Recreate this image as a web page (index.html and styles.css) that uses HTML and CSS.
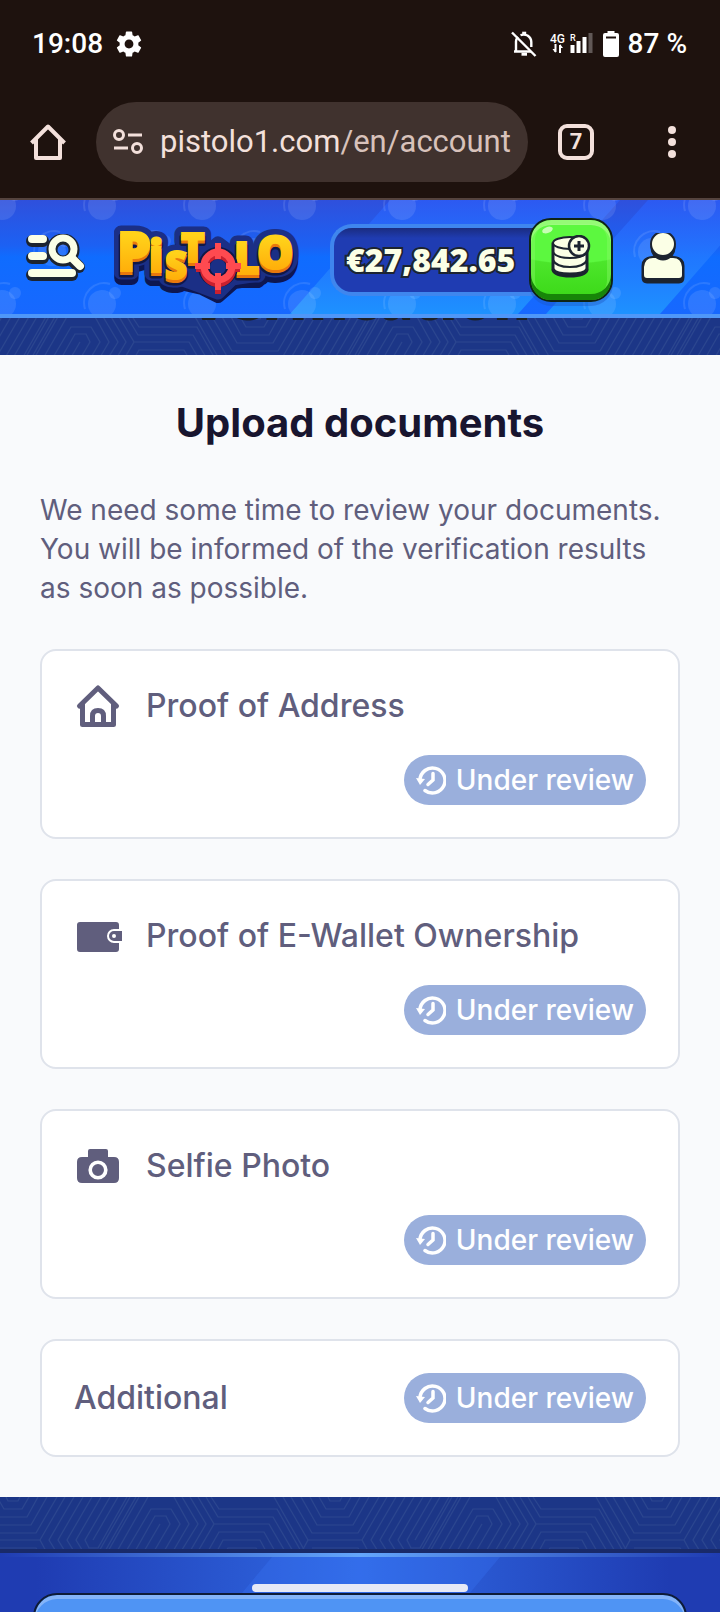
FILE: index.html
```html
<!DOCTYPE html>
<html lang="en">
<head>
<meta charset="utf-8">
<meta name="viewport" content="width=device-width, initial-scale=1">
<title>Upload documents</title>
<link rel="stylesheet" href="styles.css">
</head>
<body>
<div class="page">
  <div class="status">
    <div class="status-group">
      <span>19:08</span>
      <svg class="ic-gear" viewBox="2 2 20 20" width="26" height="26" fill="#fff"><path d="M19.14 12.94c.04-.3.06-.61.06-.94s-.02-.64-.07-.94l2.03-1.58c.18-.14.23-.41.12-.61l-1.92-3.32c-.12-.22-.37-.29-.59-.22l-2.39.96c-.5-.38-1.03-.7-1.62-.94l-.36-2.54c-.04-.24-.24-.41-.48-.41h-3.84c-.24 0-.43.17-.47.41l-.36 2.54c-.59.24-1.13.57-1.62.94l-2.39-.96c-.22-.08-.47 0-.59.22L2.74 8.87c-.12.21-.08.47.12.61l2.03 1.58c-.05.3-.09.63-.09.94s.02.64.07.94l-2.03 1.58c-.18.14-.23.41-.12.61l1.92 3.32c.12.22.37.29.59.22l2.39-.96c.5.38 1.03.7 1.62.94l.36 2.54c.05.24.24.41.48.41h3.84c.24 0 .44-.17.47-.41l.36-2.54c.59-.24 1.13-.56 1.62-.94l2.39.96c.22.08.47 0 .59-.22l1.92-3.32c.12-.22.07-.47-.12-.61l-2.01-1.58zM12 15.4c-1.9 0-3.4-1.5-3.4-3.4s1.5-3.4 3.4-3.4 3.400 1.500 3.400 3.400-1.500 3.400-3.400 3.400z"/></svg>
    </div>
    <div class="status-group status-right">
      <svg width="26" height="26" viewBox="0 0 26 26" fill="none" stroke="#fff" stroke-width="2.4"><path d="M5 20.500V10.500Q5 8 7 6M9.500 4.200Q13 3 16.500 4.500Q20.300 7 20.300 11V16M3 20.500H20"/><path d="M1 1.500L24.500 25"/><path d="M10.500 23.200H16" stroke-width="3"/><path d="M11.200 2.200H15.200" stroke-width="3"/></svg>
      <svg class="ic-net" width="44" height="22" viewBox="0 0 44 22" fill="#fff"><text x="0" y="10" class="net-text">4G</text><path d="M5.500 11V19M10 20V12" stroke="#fff" stroke-width="2" fill="none"/><path d="M2.500 16L5.500 20V16zM13 15L10 11V15z"/><text x="20" y="8" class="net-small">R</text><path d="M20.500 12h4v8h-4zM26.500 8h4v12h-4zM32.500 4h4v16h-4z"/><path d="M38.500 0h4v20h-4z" fill="#615856"/></svg>
      <svg width="16" height="26" viewBox="0 0 16 26"><path fill="#fff" d="M4.500 0h7v2H14q2 0 2 2v20q0 2-2 2H2q-2 0-2-2V4q0-2 2-2h2.500z"/><path d="M3 6.500H13" stroke="#1e120e" stroke-width="2"/></svg>
      <span>87 %</span>
    </div>
  </div>

  <div class="toolbar">
    <button class="plain" aria-label="Home"><svg width="36" height="36" viewBox="0 0 36 36" fill="none" stroke="#f3e0db" stroke-width="4" stroke-linejoin="round"><path d="M1.500 19L18 2.500L34.500 19"/><path d="M6 15V34H30V15"/></svg></button>
    <button class="address">
      <svg width="32" height="26" viewBox="0 0 32 26" fill="none" stroke="#f3e0db" stroke-width="3"><circle cx="7" cy="6" r="4.500"/><circle cx="25" cy="19" r="4.500"/><path d="M16 6H30M2 19H16"/></svg>
      <span>pistolo1.com<span class="url-path">/en/account</span></span>
    </button>
    <button class="tabs" aria-label="Tabs">7</button>
    <button class="plain" aria-label="Menu"><svg width="36" height="36" viewBox="0 0 36 36" fill="#f3e0db"><circle cx="18" cy="6" r="4"/><circle cx="18" cy="18" r="4"/><circle cx="18" cy="30" r="4"/></svg></button>
  </div>

  <header class="site-header">
    <svg class="backdrop" viewBox="0 0 720 114" preserveAspectRatio="xMidYMid slice" aria-hidden="true">
      <defs>
        <linearGradient id="beam" x1="0" y1="0" x2="0" y2="1"><stop offset="0" stop-color="#2b60ff" stop-opacity=".6"/><stop offset="1" stop-color="#1e94ff" stop-opacity=".95"/></linearGradient>
        <g id="bomb"><circle r="14"/><path d="M-17 5A20 20 0 0 1 8-20" fill="none" stroke="#fff" stroke-width="2"/><circle cx="13" cy="-11" r="6"/></g>
        <pattern id="bombs" width="100" height="98" patternUnits="userSpaceOnUse"><g fill="#fff" fill-opacity=".1" stroke-opacity=".1"><use href="#bomb" x="2" y="6"/><use href="#bomb" x="102" y="6"/><use href="#bomb" x="2" y="104"/><use href="#bomb" x="102" y="104"/><use href="#bomb" x="52" y="52"/></g></pattern>
        <pattern id="maze" width="322" height="56" patternUnits="userSpaceOnUse">
          <g id="maze-lines" fill="none" stroke="#2b468f" stroke-width="1.200">
            <path d="M6 0L8 4H18L20 0M-3 0L4 12H22L29 0M-12 0L-1 20H27L38 0M-21 0L-5 28H31L47 0M-31 0L-10 36H36L57 0M-39 0L-14 43H40L65 0M40 43L47 56M-10 51H36L39 56M-21 56L-14 43"/>
            <path d="M74 0L49 43L57 56M83 0L58 43L66 56M92 0L67 43L75 56M101 0L76 43L84 56M110 0L85 43L89 51H98L127 0M118 0L93 43"/>
            <path d="M98 56L130 0M107 56L139 0M116 56L148 0M125 56L151 12H171L180 27L163 56M134 56L155 19H166L170 27L153 56M143 56L160 27M104 56L136 0"/>
            <path d="M174 0L189 27L172 56M182 0L198 27L180 56M190 0L206 27L189 56M198 0L214 27L197 56M214 27H269L286 56M211 0L219 12H277L302 56M206 0L218 20H273L294 56M207 56L219 35H264L276 56M216 56L223 43H260L267 56M225 56L228 51H256L259 56M274 0L306 56"/>
          </g>
          <use href="#maze-lines" x="322"/>
        </pattern>
        <pattern id="maze-top" href="#maze" patternTransform="translate(-80 -3)"/>
      </defs>
      <path fill="url(#beam)" d="M290 114H518L620 0H390zM546 114H660L760 0H648z"/>
      <rect width="720" height="114" fill="url(#bombs)"/>
    </svg>

    <button class="plain" aria-label="Menu and search">
      <svg width="60" height="52" viewBox="0 1 60 52">
        <defs><g id="search-menu" stroke-linecap="round" stroke-linejoin="round"><path d="M6 6H17M6 23H17" stroke-width="8"/><path d="M6 40H46" stroke-width="8"/><circle cx="37" cy="16" r="11" stroke-width="7" fill="none"/><path d="M46 25L54 33" stroke-width="8"/></g></defs>
        <g stroke="#1c2430" fill="none"><path d="M6 8H17M6 25H17" stroke-width="12" stroke-linecap="round"/><path d="M6 42H46" stroke-width="12" stroke-linecap="round"/><circle cx="37" cy="17" r="11" stroke-width="11"/><path d="M46 27L53 34" stroke-width="12" stroke-linecap="round"/></g>
        <use href="#search-menu" stroke="#fbffe6" fill="none"/>
      </svg>
    </button>

    <a class="logo" href="#" aria-label="Pistolo">
      <svg width="188" height="96" viewBox="2 -12 188 96">
        <defs>
          <linearGradient id="gold" x1="0" y1="0" x2="0" y2="1"><stop offset=".3" stop-color="#ffd21a"/><stop offset=".8" stop-color="#ffae0a"/></linearGradient>
          <g id="letters">
            <text x="5" y="47" font-size="54">P</text>
            <text x="37" y="48" font-size="44">i</text>
            <text x="53" y="55" font-size="38">S</text>
            <text x="69" y="38" font-size="40">T</text>
            <text x="122" y="50" font-size="44">L</text>
            <text x="145" y="45" font-size="46">O</text>
          </g>
        </defs>
        <g stroke="#0d1752" stroke-width="14" fill="#0d1752" stroke-linejoin="round"><use href="#letters" y="7"/><path d="M64 58L90 64L106 72L122 58L150 54L106 24z"/></g>
        <g stroke="#1b2f86" stroke-width="15" fill="#1b2f86" stroke-linejoin="round"><use href="#letters" y="1"/><path d="M68 54L90 62L106 68L120 54L146 50L106 20z"/></g>
        <use href="#letters" y="4" fill="#e8780c" stroke="#101846" stroke-width="5" stroke-linejoin="round"/>
        <use href="#letters" y="3" fill="#e8780c" stroke="#e8780c" stroke-width="2"/>
        <use href="#letters" fill="url(#gold)" stroke="url(#gold)" stroke-width="2"/>
        <g fill="none" stroke="#101846" stroke-width="12"><circle cx="106" cy="43" r="14"/></g>
        <g fill="none" stroke="#c9202f" stroke-width="8"><circle cx="106" cy="45" r="14"/><path d="M106 62V70M84 45H94M118 45H128" stroke-width="6"/></g>
        <g fill="none" stroke="#ff4a50" stroke-width="7"><circle cx="106" cy="42" r="14"/><path d="M106 19V35M106 49V66M83 42H98M114 42H129" stroke-width="6"/></g>
      </svg>
    </a>

    <div class="wallet">
      <span class="amount">€27,842.65</span>
      <button class="deposit" aria-label="Deposit">
        <svg width="40" height="44" viewBox="0 0 40 44" fill="#fbffe6" stroke="#1c2430" stroke-width="2">
          <path d="M2 9V35Q4 41 19 41Q34 41 36 35V9z" stroke-width="3"/>
          <path d="M2 34Q4 39 19 39Q34 39 36 34" fill="none" stroke-width="3"/>
          <path d="M2 25Q5 32 19 32Q33 32 36 25M2 17Q5 23 19 23Q33 23 36 17" fill="none"/>
          <ellipse cx="19" cy="8" rx="17" ry="6"/>
          <circle cx="28" cy="11" r="10" stroke-width="2.500"/><path d="M28 6V16M23 11H33" stroke-width="3"/>
        </svg>
        <i class="glint"></i>
      </button>
    </div>

    <button class="plain" aria-label="Account">
      <svg width="44" height="54" viewBox="0 2 44 54" stroke="#1c2430" stroke-width="3">
        <path fill="#1c2430" d="M2 35Q2 27 11 27H33Q42 27 42 35V46Q42 51 38 51H6Q2 51 2 46z"/>
        <path fill="#fbffe6" stroke-width="2" d="M2 36Q3 26 12 26H32Q41 26 42 36V44Q42 48 38 48H6Q2 48 2 44z"/>
        <circle fill="#1c2430" cx="22" cy="17" r="11"/><circle fill="#fbffe6" stroke-width="2" cx="22" cy="13" r="12"/>
      </svg>
    </button>
  </header>

  <div class="band band-top">
    <svg class="backdrop" aria-hidden="true"><rect width="100%" height="100%" fill="url(#maze-top)"/></svg>
    <h1>Verification</h1>
  </div>

  <main class="panel">
    <h2>Upload documents</h2>
    <p>We need some time to review your documents. You will be informed of the verification results as soon as possible.</p>
    <ul class="cards">
      <li class="card">
        <div class="card-title"><svg width="48" height="44" viewBox="0 0 48 44" fill="none" stroke="#605e7d" stroke-width="5" stroke-linejoin="round" stroke-linecap="round"><path d="M5.500 22L24 4L42.500 22"/><path d="M8.500 20V40.500H39.500V20"/><path d="M18.500 40V32Q18.500 26.500 24 26.500Q29.500 26.500 29.500 32V40" /></svg><span>Proof of Address</span></div>
        <span class="badge"><svg width="30" height="30" viewBox="0 0 30 30" fill="none" stroke="#fff" stroke-width="3.500"><path d="M4 15A12.500 12.500 0 1 1 9 25.500" stroke-linecap="round"/><path fill="#fff" stroke="none" d="M0 13L9 14L4 20z"/><path d="M17 8.500V15L12 19.500" stroke-linecap="round"/></svg>Under review</span>
      </li>
      <li class="card">
        <div class="card-title"><svg width="48" height="44" viewBox="0 0 48 44" fill="#605e7d"><path d="M6 8H42Q45 8 45 11V15H40A7 7 0 0 0 40 29H45V35Q45 38 42 38H6Q3 38 3 35V11Q3 8 6 8z"/><path fill-rule="evenodd" d="M40 17H48V27H40A5 5 0 0 1 40 17zM40 20A2 2 0 1 0 40 24A2 2 0 1 0 40 20z"/></svg><span>Proof of E-Wallet Ownership</span></div>
        <span class="badge"><svg width="30" height="30" viewBox="0 0 30 30" fill="none" stroke="#fff" stroke-width="3.500"><path d="M4 15A12.500 12.500 0 1 1 9 25.500" stroke-linecap="round"/><path fill="#fff" stroke="none" d="M0 13L9 14L4 20z"/><path d="M17 8.500V15L12 19.500" stroke-linecap="round"/></svg>Under review</span>
      </li>
      <li class="card">
        <div class="card-title"><svg width="48" height="44" viewBox="0 0 48 44"><path fill="#605e7d" d="M8 13H14V7Q14 5 16 5H32Q34 5 34 7V13H40Q45 13 45 18V34Q45 39 40 39H8Q3 39 3 34V18Q3 13 8 13z"/><circle cx="24" cy="26" r="7.800" fill="none" stroke="#fff" stroke-width="3.600"/></svg><span>Selfie Photo</span></div>
        <span class="badge"><svg width="30" height="30" viewBox="0 0 30 30" fill="none" stroke="#fff" stroke-width="3.500"><path d="M4 15A12.500 12.500 0 1 1 9 25.500" stroke-linecap="round"/><path fill="#fff" stroke="none" d="M0 13L9 14L4 20z"/><path d="M17 8.500V15L12 19.500" stroke-linecap="round"/></svg>Under review</span>
      </li>
      <li class="card card-row">
        <span>Additional</span>
        <span class="badge"><svg width="30" height="30" viewBox="0 0 30 30" fill="none" stroke="#fff" stroke-width="3.500"><path d="M4 15A12.500 12.500 0 1 1 9 25.500" stroke-linecap="round"/><path fill="#fff" stroke="none" d="M0 13L9 14L4 20z"/><path d="M17 8.500V15L12 19.500" stroke-linecap="round"/></svg>Under review</span>
      </li>
    </ul>
  </main>

  <div class="band band-bottom">
    <svg class="backdrop" aria-hidden="true"><rect width="100%" height="100%" fill="url(#maze)"/></svg>
  </div>

  <footer class="site-footer">
    <svg class="backdrop" viewBox="0 0 720 55" preserveAspectRatio="xMidYMid slice" aria-hidden="true"><path fill="#3c7dff" fill-opacity=".25" d="M272 0H500L454 55H226z"/></svg>
    <button class="footer-button" aria-label="More"></button>
  </footer>
  <div class="gesture-bar"></div>
</div>
</body>
</html>
```
FILE: styles.css
```css
* { box-sizing: border-box; }
body {
  margin: 0;
  font-family: Inter, "Liberation Sans", sans-serif;
  color: #605e7d;
  background: #1f3cb2;
}
.page {
  position: relative;
  display: flex;
  flex-direction: column;
  overflow: hidden;
}
button {
  font: inherit;
  color: inherit;
  border: 0;
  cursor: pointer;
}
svg { display: block; flex: none; }
.plain { flex: none; padding: 0; background: none; }

.status {
  display: flex;
  justify-content: space-between;
  align-items: center;
  height: 88px;
  padding: 0 33px 0 32px;
  background: #1e120e;
  color: #fff;
  font: 500 28px/32px Roboto, sans-serif;
}
.status-group { display: flex; align-items: center; gap: 13px; }
.status-right { gap: 9px; }
.ic-net { margin-left: 4px; }
.net-text { font: 500 12px Roboto, sans-serif; }
.net-small { font: 500 9px Roboto, sans-serif; }

.toolbar {
  display: flex;
  align-items: center;
  gap: 30px;
  padding: 14px 30px 16px;
  background: #1e120e;
  border-bottom: 2px solid #54433e;
}
.address {
  flex: 1;
  min-width: 0;
  display: flex;
  align-items: center;
  gap: 16px;
  height: 80px;
  padding: 0 16px;
  border-radius: 40px;
  background: #40322e;
  color: #f3e0db;
  font: 400 31px/40px Roboto, sans-serif;
  white-space: nowrap;
}
.url-path { color: #d8c2bb; }
.tabs {
  flex: none;
  width: 36px;
  height: 36px;
  margin-right: 30px;
  padding: 0;
  border: 4px solid #f3e0db;
  border-radius: 9px;
  background: none;
  color: #f3e0db;
  font: 700 22px/28px Roboto, sans-serif;
}

.site-header {
  position: relative;
  display: flex;
  align-items: center;
  gap: 28px;
  height: 118px;
  padding: 6px 35px 0 26px;
  border-bottom: 4px solid #4f97f8;
  background: linear-gradient(#2f50dc, #1c61f3 40%, #0f6cff 50%, #1768ff);
}
.site-header > * { position: relative; }
.backdrop, .site-header > .backdrop {
  position: absolute;
  top: 0;
  left: 0;
  width: 100%;
  height: 100%;
}
.logo text { font-family: "Open Sans", sans-serif; font-weight: 800; }
.wallet {
  flex: 1;
  display: flex;
  align-items: center;
  justify-content: space-between;
  height: 72px;
  border: 4px solid #3f86ee;
  border-right: 0;
  border-radius: 22px;
  background: linear-gradient(#1a2c80, #1f3cb2 16%);
}
.amount {
  padding-left: 12px;
  color: #fbffe6;
  font: 900 32px/40px "Noto Sans", "Open Sans", sans-serif;
  -webkit-text-stroke: 4px #1c2430;
  paint-order: stroke fill;
  text-shadow: 0 2px 0 #1c2430;
}
.deposit {
  position: relative;
  display: grid;
  place-items: center;
  width: 84px;
  height: 84px;
  padding: 0 0 6px;
  border: 2px solid #0e2416;
  border-radius: 22px;
  background: radial-gradient(ellipse 110px 60px at 50% -16px, #5cf83f 98%, transparent), linear-gradient(#5ff53f, #3bd818);
  box-shadow: inset 0 -6px 0 #178508, inset 0 0 0 4px #8cfa6c66, inset 0 5px 0 #9cfb7e, 0 4px 0 #1b56c066;
}
.glint {
  position: absolute;
  top: 7px;
  left: 11px;
  width: 11px;
  height: 6px;
  border-radius: 50%;
  background: #c6fdb4;
  rotate: -20deg;
}

.band { position: relative; overflow: hidden; background: #1c3687; }
.band-top { height: 37px; }
.band-top h1 {
  position: relative;
  margin: -52px 0 0;
  text-align: center;
  color: #1c2026;
  font: 800 56px/64px "Open Sans", sans-serif;
}
.band-bottom { height: 56px; border-bottom: 4px solid #192a69; }

.panel { padding: 40px; background: #f9fafc; }
.panel h2 {
  margin: 4px 0 44px;
  text-align: center;
  color: #18152f;
  font-size: 40px;
  line-height: 48px;
  font-weight: 700;
}
.panel p { margin: 0 0 41px; font-size: 28px; line-height: 39px; }
.cards {
  display: flex;
  flex-direction: column;
  gap: 40px;
  margin: 0;
  padding: 0;
  list-style: none;
}
.card {
  display: flex;
  flex-direction: column;
  gap: 26px;
  padding: 32px;
  border: 2px solid #dfe3eb;
  border-radius: 16px;
  background: #fff;
  font-size: 32px;
  line-height: 46px;
  font-weight: 500;
}
.card-title { display: flex; align-items: center; gap: 24px; }
.card-row { flex-direction: row; align-items: center; justify-content: space-between; }
.badge {
  display: flex;
  align-items: center;
  align-self: flex-end;
  gap: 10px;
  height: 50px;
  padding: 0 12px;
  border-radius: 25px;
  background: #9aafdc;
  color: #fff;
  font-size: 28px;
}

.site-footer {
  position: relative;
  height: 59px;
  padding: 36px 33px 0;
  overflow: hidden;
  border-top: 4px solid;
  border-image: linear-gradient(90deg, #1f3cb2, #64a6fb 50%, #1f3cb2) 1;
  background: linear-gradient(90deg, #1f3cb2 5%, #3069e4 50%, #1f3cb2 93%);
}
.footer-button {
  position: relative;
  display: block;
  width: 100%;
  height: 80px;
  border: 2px solid #0e1c38;
  border-radius: 24px;
  background: #4f94f4;
  box-shadow: inset 0 4px 0 #84b4f9;
}
.gesture-bar {
  position: absolute;
  left: 50%;
  bottom: 20px;
  width: 216px;
  height: 8px;
  margin-left: -108px;
  border-radius: 4px;
  background: #e6e9f6;
}
```
